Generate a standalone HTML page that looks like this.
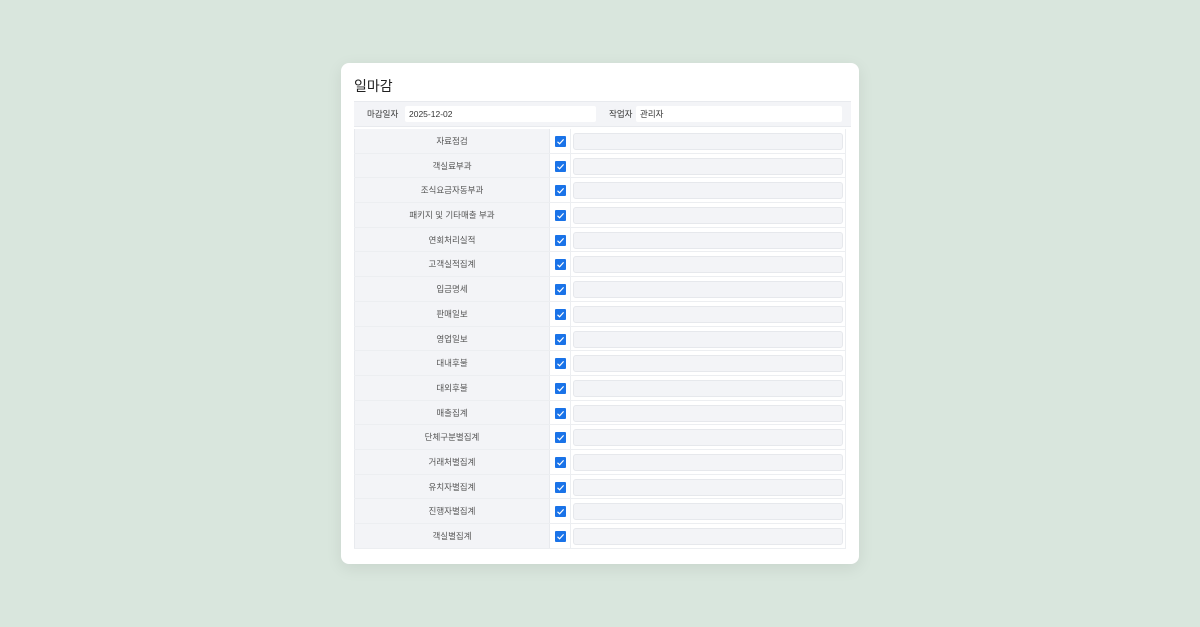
<!DOCTYPE html>
<html><head><meta charset="utf-8"><style>
*{box-sizing:border-box;margin:0;padding:0}
body{width:1200px;height:627px;background:#d9e6dd;font-family:"Liberation Sans","Noto Sans CJK KR",sans-serif;position:relative;overflow:hidden}
.card{position:absolute;left:341px;top:63px;width:518px;height:501px;background:#fff;border-radius:8px;box-shadow:0 4px 16px rgba(0,0,0,.08)}
.title{position:absolute;left:13px;top:13px;font-size:14px;color:#222}
.hdr{position:absolute;left:13px;top:38px;width:497px;height:26px;background:#f3f4f7;border-top:1px solid #e8eaee;border-bottom:1px solid #e8eaee;font-size:8.5px;color:#333}
.hdr span{position:absolute;top:0;line-height:24px}
.hdr .in{position:absolute;top:4px;height:16px;line-height:16px;background:#fff;border-radius:2px;padding:0 4px;color:#333}
.tbl{position:absolute;left:13px;top:66px;width:492px}
.row{height:24.7px;position:relative;border-bottom:1px solid #eceef1}
.lab{position:absolute;left:0;top:0;width:196px;height:100%;background:#f3f4f7;border-left:1px solid #e8eaee;border-right:1px solid #e8eaee;font-size:8.5px;color:#555;text-align:center;line-height:24px}
.cb{position:absolute;left:201px;top:7px;width:11px;height:11px;background:#1a73e8;border-radius:1px}
.cb svg{position:absolute;left:0;top:0}
.sep{position:absolute;left:216px;top:0;width:1px;height:100%;background:#eceef1}
.box{position:absolute;left:219px;top:4px;width:270px;height:17px;background:#f3f4f7;border:1px solid #e6e8ec;border-radius:3px}
.rb{position:absolute;left:491px;top:0;width:1px;height:100%;background:#eceef1}
</style></head><body>
<div class="card">
<div class="title">일마감</div>
<div class="hdr"><span style="left:13px">마감일자</span><div class="in" style="left:51px;width:191px">2025-12-02</div><span style="left:255px">작업자</span><div class="in" style="left:282px;width:206px">관리자</div></div>
<div class="tbl">
<div class="row"><div class="lab">자료점검</div><div class="cb"><svg width="11" height="11"><path d="M2.5 5.8L4.6 7.8L8.6 3.4" stroke="#fff" stroke-width="1.2" fill="none"/></svg></div><div class="sep"></div><div class="box"></div><div class="rb"></div></div>
<div class="row"><div class="lab">객실료부과</div><div class="cb"><svg width="11" height="11"><path d="M2.5 5.8L4.6 7.8L8.6 3.4" stroke="#fff" stroke-width="1.2" fill="none"/></svg></div><div class="sep"></div><div class="box"></div><div class="rb"></div></div>
<div class="row"><div class="lab">조식요금자동부과</div><div class="cb"><svg width="11" height="11"><path d="M2.5 5.8L4.6 7.8L8.6 3.4" stroke="#fff" stroke-width="1.2" fill="none"/></svg></div><div class="sep"></div><div class="box"></div><div class="rb"></div></div>
<div class="row"><div class="lab">패키지 및 기타매출 부과</div><div class="cb"><svg width="11" height="11"><path d="M2.5 5.8L4.6 7.8L8.6 3.4" stroke="#fff" stroke-width="1.2" fill="none"/></svg></div><div class="sep"></div><div class="box"></div><div class="rb"></div></div>
<div class="row"><div class="lab">연회처리실적</div><div class="cb"><svg width="11" height="11"><path d="M2.5 5.8L4.6 7.8L8.6 3.4" stroke="#fff" stroke-width="1.2" fill="none"/></svg></div><div class="sep"></div><div class="box"></div><div class="rb"></div></div>
<div class="row"><div class="lab">고객실적집계</div><div class="cb"><svg width="11" height="11"><path d="M2.5 5.8L4.6 7.8L8.6 3.4" stroke="#fff" stroke-width="1.2" fill="none"/></svg></div><div class="sep"></div><div class="box"></div><div class="rb"></div></div>
<div class="row"><div class="lab">입금명세</div><div class="cb"><svg width="11" height="11"><path d="M2.5 5.8L4.6 7.8L8.6 3.4" stroke="#fff" stroke-width="1.2" fill="none"/></svg></div><div class="sep"></div><div class="box"></div><div class="rb"></div></div>
<div class="row"><div class="lab">판매일보</div><div class="cb"><svg width="11" height="11"><path d="M2.5 5.8L4.6 7.8L8.6 3.4" stroke="#fff" stroke-width="1.2" fill="none"/></svg></div><div class="sep"></div><div class="box"></div><div class="rb"></div></div>
<div class="row"><div class="lab">영업일보</div><div class="cb"><svg width="11" height="11"><path d="M2.5 5.8L4.6 7.8L8.6 3.4" stroke="#fff" stroke-width="1.2" fill="none"/></svg></div><div class="sep"></div><div class="box"></div><div class="rb"></div></div>
<div class="row"><div class="lab">대내후불</div><div class="cb"><svg width="11" height="11"><path d="M2.5 5.8L4.6 7.8L8.6 3.4" stroke="#fff" stroke-width="1.2" fill="none"/></svg></div><div class="sep"></div><div class="box"></div><div class="rb"></div></div>
<div class="row"><div class="lab">대외후불</div><div class="cb"><svg width="11" height="11"><path d="M2.5 5.8L4.6 7.8L8.6 3.4" stroke="#fff" stroke-width="1.2" fill="none"/></svg></div><div class="sep"></div><div class="box"></div><div class="rb"></div></div>
<div class="row"><div class="lab">매출집계</div><div class="cb"><svg width="11" height="11"><path d="M2.5 5.8L4.6 7.8L8.6 3.4" stroke="#fff" stroke-width="1.2" fill="none"/></svg></div><div class="sep"></div><div class="box"></div><div class="rb"></div></div>
<div class="row"><div class="lab">단체구분별집계</div><div class="cb"><svg width="11" height="11"><path d="M2.5 5.8L4.6 7.8L8.6 3.4" stroke="#fff" stroke-width="1.2" fill="none"/></svg></div><div class="sep"></div><div class="box"></div><div class="rb"></div></div>
<div class="row"><div class="lab">거래처별집계</div><div class="cb"><svg width="11" height="11"><path d="M2.5 5.8L4.6 7.8L8.6 3.4" stroke="#fff" stroke-width="1.2" fill="none"/></svg></div><div class="sep"></div><div class="box"></div><div class="rb"></div></div>
<div class="row"><div class="lab">유치자별집계</div><div class="cb"><svg width="11" height="11"><path d="M2.5 5.8L4.6 7.8L8.6 3.4" stroke="#fff" stroke-width="1.2" fill="none"/></svg></div><div class="sep"></div><div class="box"></div><div class="rb"></div></div>
<div class="row"><div class="lab">진행자별집계</div><div class="cb"><svg width="11" height="11"><path d="M2.5 5.8L4.6 7.8L8.6 3.4" stroke="#fff" stroke-width="1.2" fill="none"/></svg></div><div class="sep"></div><div class="box"></div><div class="rb"></div></div>
<div class="row"><div class="lab">객실별집계</div><div class="cb"><svg width="11" height="11"><path d="M2.5 5.8L4.6 7.8L8.6 3.4" stroke="#fff" stroke-width="1.2" fill="none"/></svg></div><div class="sep"></div><div class="box"></div><div class="rb"></div></div>
</div>
</div>
</body></html>
